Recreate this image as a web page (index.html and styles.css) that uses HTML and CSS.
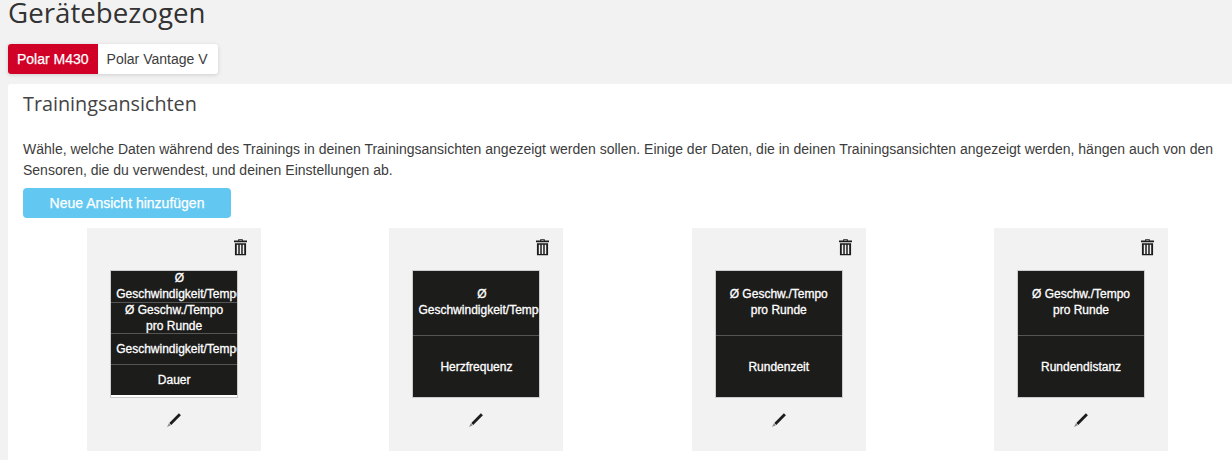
FILE: index.html
```html
<!DOCTYPE html>
<html lang="de">
<head>
    <meta charset="UTF-8">
    <title>Gerätebezogen</title>
    <link rel="stylesheet" href="styles.css">
</head>
<body>
    <svg class="icon-defs" width="0" height="0">
        <symbol id="trash" viewBox="0 0 14 18">
            <path d="M4.5 2V.6h5V2H14v2H0V2zM5.6 1.4V2h2.8v-.6zM1 5h12v13H1zM3 6.5v10h1.6v-10zM6.2 6.5v10h1.6v-10zM9.4 6.5v10H11v-10z" fill-rule="evenodd"/>
        </symbol>
        <symbol id="pencil" viewBox="0 0 16 16">
            <path d="M12.9 1.3l2 2-9.6 9.6-2-2z"/>
            <path d="M2.9 11.3l2 2-3.9 1.8z" fill="#8a8a8a"/>
        </symbol>
    </svg>

    <h1 class="page-title">Gerätebezogen</h1>

    <div class="tabs">
        <span class="tab active">Polar M430</span>
        <span class="tab">Polar Vantage V</span>
    </div>

    <section class="panel">
        <h2>Trainingsansichten</h2>
        <p>Wähle, welche Daten während des Trainings in deinen Trainingsansichten angezeigt werden sollen. Einige der Daten, die in deinen Trainingsansichten angezeigt werden, hängen auch von den Sensoren, die du verwendest, und deinen Einstellungen ab.</p>
        <button class="add-button" type="button">Neue Ansicht hinzufügen</button>

        <div class="views">
            <div class="view-col">
                <div class="view-card">
                    <svg class="trash"><use href="#trash"/></svg>
                    <div class="screen four">
                        <div class="field"><span>Ø Geschwindigkeit/Tempo</span></div>
                        <div class="field"><span>Ø Geschw./Tempo pro Runde</span></div>
                        <div class="field"><span>Geschwindigkeit/Tempo</span></div>
                        <div class="field"><span>Dauer</span></div>
                    </div>
                    <svg class="pencil"><use href="#pencil"/></svg>
                </div>
            </div>
            <div class="view-col">
                <div class="view-card">
                    <svg class="trash"><use href="#trash"/></svg>
                    <div class="screen">
                        <div class="field"><span>Ø Geschwindigkeit/Tempo</span></div>
                        <div class="field"><span>Herzfrequenz</span></div>
                    </div>
                    <svg class="pencil"><use href="#pencil"/></svg>
                </div>
            </div>
            <div class="view-col">
                <div class="view-card">
                    <svg class="trash"><use href="#trash"/></svg>
                    <div class="screen">
                        <div class="field"><span>Ø Geschw./Tempo pro Runde</span></div>
                        <div class="field"><span>Rundenzeit</span></div>
                    </div>
                    <svg class="pencil"><use href="#pencil"/></svg>
                </div>
            </div>
            <div class="view-col">
                <div class="view-card">
                    <svg class="trash"><use href="#trash"/></svg>
                    <div class="screen">
                        <div class="field"><span>Ø Geschw./Tempo pro Runde</span></div>
                        <div class="field"><span>Rundendistanz</span></div>
                    </div>
                    <svg class="pencil"><use href="#pencil"/></svg>
                </div>
            </div>
        </div>
    </section>
</body>
</html>
```

FILE: styles.css
```css
html {
    overflow: hidden;
}
body {
    margin: 0;
    height: 460px;
    overflow: hidden;
    background-color: #f2f2f2;
    color: #3c3c3c;
    font-family: "Liberation Sans", Arial, sans-serif;
    font-size: 14px;
}
.icon-defs {
    position: absolute;
}
.page-title {
    margin: 0 0 0 8px;
    height: 44px;
    font-family: "Open Sans", sans-serif;
    font-size: 27.7px;
    font-weight: 400;
    line-height: 24px;
    color: #333;
}
.tabs {
    display: inline-flex;
    margin-left: 8px;
    height: 30px;
    border-radius: 3px;
    background-color: white;
    box-shadow: 0 1px 4px rgba(0, 0, 0, 0.15);
    vertical-align: top;
}
.tab {
    padding: 0 10px 0 9px;
    line-height: 30px;
}
.tab.active {
    padding-right: 9px;
    background-color: #d10027;
    border-radius: 3px 0 0 3px;
    color: white;
    -webkit-text-stroke: 0.25px white;
}
.panel {
    box-sizing: border-box;
    margin: 10px 0 0 8px;
    padding: 6px 15px 0;
    height: 376px;
    background-color: white;
    border-radius: 3px 0 0 0;
}
h2 {
    margin: 0 0 22px;
    font-family: "Open Sans", sans-serif;
    font-size: 19.8px;
    font-weight: 400;
    line-height: 27px;
    color: #444;
}
p {
    margin: 0 0 7px;
    line-height: 21px;
    width: 1194px;
}
.add-button {
    display: block;
    width: 208px;
    height: 30px;
    padding: 0;
    border: none;
    border-radius: 4px;
    background-color: #63c8f1;
    color: white;
    font-family: inherit;
    font-size: 14px;
    font-weight: 400;
    -webkit-text-stroke: 0.25px white;
}
.views {
    display: grid;
    grid-template-columns: repeat(4, 302.3px);
    margin-top: 10px;
}
.view-col {
    display: flex;
    justify-content: center;
}
.view-card {
    display: flex;
    flex-direction: column;
    align-items: center;
    width: 174px;
    height: 223px;
    background-color: #f2f2f2;
}
.trash {
    align-self: flex-end;
    width: 13px;
    height: 18px;
    margin: 10px 14px 14px 0;
    fill: #1c1c1c;
}
.screen {
    display: flex;
    flex-direction: column;
    box-sizing: border-box;
    width: 128px;
    height: 128px;
    border: 1px solid #ccc;
    background-color: #1c1c1b;
    color: white;
    font-size: 12px;
    line-height: 16px;
    text-align: center;
    -webkit-text-stroke: 0.3px white;
}
.field {
    flex: 1;
    display: flex;
    align-items: center;
    justify-content: safe center;
    min-height: 0;
    padding: 0 5px;
    overflow: hidden;
    border-top: 1px solid #555;
}
.field:first-child {
    flex: none;
    box-sizing: border-box;
    height: 64px;
    padding-bottom: 2px;
    border-top: none;
}
.screen.four {
    background-image: linear-gradient(#1c1c1b, #1c1c1b);
    background-color: white;
    background-repeat: no-repeat;
    background-size: 100% 124px;
}
.screen.four .field {
    flex: none;
    box-sizing: border-box;
    height: 31px;
    padding-bottom: 1px;
}
.pencil {
    width: 16px;
    height: 16px;
    margin-top: 14px;
    fill: #1c1c1c;
}
```
